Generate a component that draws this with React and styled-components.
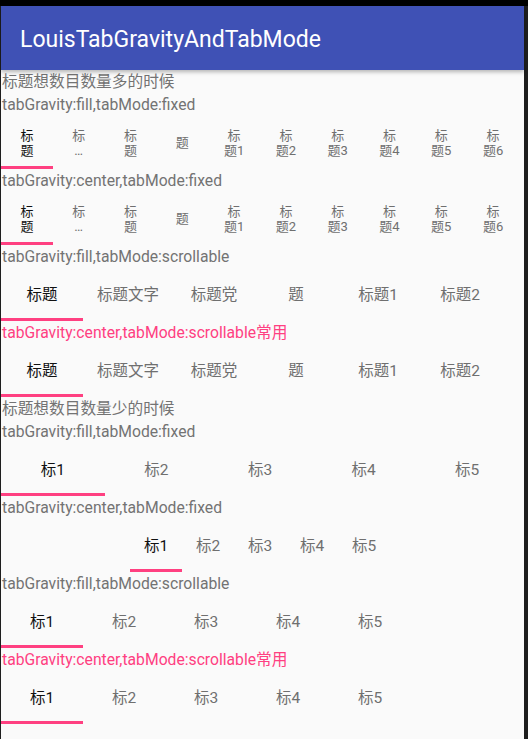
import React from "react";
import styled, { createGlobalStyle } from "styled-components";

const GlobalStyle = createGlobalStyle`
  html, body {
    margin: 0;
    padding: 0;
    background: #1e1e1e;
  }
  * {
    box-sizing: border-box;
  }
`;

const StatusBar = styled.div`
  height: 6px;
  background: #000;
`;

const Frame = styled.div`
  display: flex;
  padding-left: 1px;
`;

const Screen = styled.div`
  width: 523px;
  min-height: 733px;
  background: #fafafa;
  font-family: Roboto, "Noto Sans CJK SC", sans-serif;
`;

const AppBar = styled.header`
  position: relative;
  z-index: 2;
  height: 64px;
  display: flex;
  align-items: center;
  padding: 3px 0 0 19px;
  background: #3f51b5;
  box-shadow: 0 2px 4px rgba(0, 0, 0, 0.28);
`;

const Title = styled.h1`
  margin: 0;
  font-family: Roboto, sans-serif;
  font-size: 23px;
  font-weight: 400;
  color: #fff;
`;

const Label = styled.div`
  height: 23px;
  line-height: 23px;
  padding-left: 1px;
  font-size: 15.7px;
  white-space: nowrap;
  color: ${({ $accent }) => ($accent ? "#ff4081" : "#737373")};
`;

const TabRow = styled.div`
  width: 518px;
  height: 53px;
  display: flex;
  justify-content: ${({ $center }) => ($center ? "center" : "flex-start")};
  overflow: hidden;
`;

const Tab = styled.div`
  flex: ${({ $mode }) => ($mode === "fill" ? "1 1 0" : "none")};
  width: ${({ $mode }) => ($mode === "narrow" ? "52px" : "auto")};
  min-width: ${({ $mode }) => ($mode === "scroll" ? "82px" : "0")};
  padding: 3px ${({ $mode }) => ($mode === "scroll" ? "14px" : "0")} 0;
  display: flex;
  flex-direction: column;
  align-items: center;
  justify-content: center;
  border-bottom: 3px solid
    ${({ $active }) => ($active ? "#ff4081" : "transparent")};
  color: ${({ $active }) => ($active ? "#111" : "#6f6f6f")};
  font-size: ${({ $small }) => ($small ? "13px" : "15.5px")};
  line-height: ${({ $small }) => ($small ? "15px" : "20px")};
  white-space: nowrap;
`;

const manyFixed = [
  ["标", "题"],
  ["标", "…"],
  ["标", "题"],
  ["题"],
  ["标", "题1"],
  ["标", "题2"],
  ["标", "题3"],
  ["标", "题4"],
  ["标", "题5"],
  ["标", "题6"],
];

const manyScroll = ["标题", "标题文字", "标题党", "题", "标题1", "标题2"];
const few = ["标1", "标2", "标3", "标4", "标5"];

const Tabs = ({ items, mode, center, small }) => (
  <TabRow $center={center}>
    {items.map((item, i) => (
      <Tab key={i} $mode={mode} $active={i === 0} $small={small}>
        {Array.isArray(item)
          ? item.map((line, j) => <span key={j}>{line}</span>)
          : item}
      </Tab>
    ))}
  </TabRow>
);

export default function App() {
  return (
    <>
      <GlobalStyle />
      <StatusBar />
      <Frame>
        <Screen>
          <AppBar>
            <Title>LouisTabGravityAndTabMode</Title>
          </AppBar>

          <Label>标题想数目数量多的时候</Label>
          <Label>tabGravity:fill,tabMode:fixed</Label>
          <Tabs items={manyFixed} mode="fill" small />
          <Label>tabGravity:center,tabMode:fixed</Label>
          <Tabs items={manyFixed} mode="fill" small />
          <Label>tabGravity:fill,tabMode:scrollable</Label>
          <Tabs items={manyScroll} mode="scroll" />
          <Label $accent>tabGravity:center,tabMode:scrollable常用</Label>
          <Tabs items={manyScroll} mode="scroll" />

          <Label>标题想数目数量少的时候</Label>
          <Label>tabGravity:fill,tabMode:fixed</Label>
          <Tabs items={few} mode="fill" />
          <Label>tabGravity:center,tabMode:fixed</Label>
          <Tabs items={few} mode="narrow" center />
          <Label>tabGravity:fill,tabMode:scrollable</Label>
          <Tabs items={few} mode="scroll" />
          <Label $accent>tabGravity:center,tabMode:scrollable常用</Label>
          <Tabs items={few} mode="scroll" />
        </Screen>
      </Frame>
    </>
  );
}
